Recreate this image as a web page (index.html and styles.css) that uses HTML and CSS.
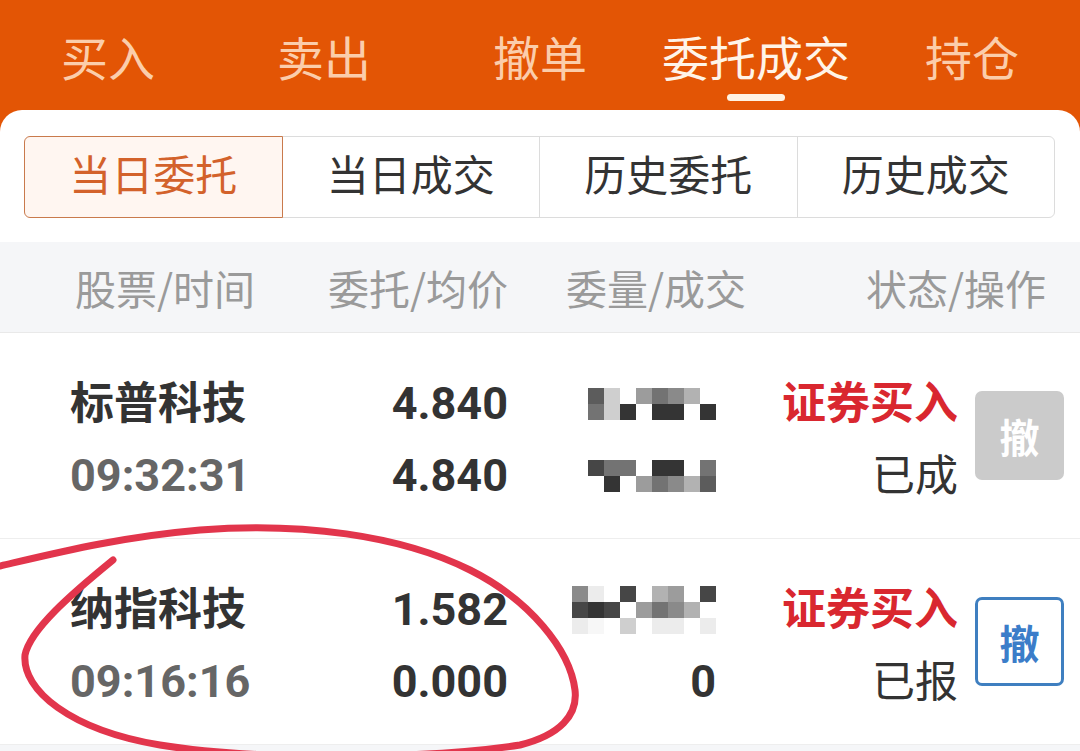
FILE: index.html
```html
<!DOCTYPE html>
<html lang="zh-CN">
<head>
  <meta charset="UTF-8">
  <meta name="viewport" content="width=device-width, initial-scale=1">
  <title>委托成交</title>
  <link rel="stylesheet" href="styles.css">
</head>
<body>
  <nav class="topnav">
    <div class="tab">买入</div>
    <div class="tab">卖出</div>
    <div class="tab">撤单</div>
    <div class="tab on">委托成交</div>
    <div class="tab">持仓</div>
  </nav>

  <main class="panel">
    <div class="seg">
      <div class="on">当日委托</div>
      <div>当日成交</div>
      <div>历史委托</div>
      <div>历史成交</div>
    </div>

    <div class="thead">
      <span>股票/时间</span>
      <span class="r">委托/均价</span>
      <span class="c3">委量/成交</span>
      <span class="r">状态/操作</span>
    </div>

    <div class="row">
      <div class="cell">
        <div class="ln name">标普科技</div>
        <div class="ln time">09:32:31</div>
      </div>
      <div class="cell r">
        <div class="ln price">4.840</div>
        <div class="ln price">4.840</div>
      </div>
      <div class="cell">
        <div class="ln mosaic">
          <div class="px w8">
            <i class="s3"></i><i class="s8"></i><i></i><i class="s6"></i><i class="s4"></i><i class="s5"></i><i class="s7"></i><i></i>
            <i class="s4"></i><i class="s8"></i><i class="s1"></i><i></i><i class="s1"></i><i class="s1"></i><i></i><i class="s1"></i>
          </div>
        </div>
        <div class="ln mosaic">
          <div class="px w8">
            <i class="s2"></i><i class="s4"></i><i class="s4"></i><i></i><i class="s1"></i><i class="s1"></i><i></i><i class="s4"></i>
            <i></i><i class="s1"></i><i></i><i class="s6"></i><i class="s4"></i><i class="s5"></i><i class="s7"></i><i class="s3"></i>
          </div>
        </div>
      </div>
      <div class="cell r">
        <div class="ln buy">证券买入</div>
        <div class="ln st">已成</div>
      </div>
      <div class="btn off">撤</div>
    </div>

    <div class="row">
      <div class="cell">
        <div class="ln name">纳指科技</div>
        <div class="ln time">09:16:16</div>
      </div>
      <div class="cell r">
        <div class="ln price">1.582</div>
        <div class="ln price">0.000</div>
      </div>
      <div class="cell">
        <div class="ln mosaic">
          <div class="px w9">
            <i class="s5"></i><i class="s9"></i><i></i><i class="s2"></i><i></i><i class="s7"></i><i class="s6"></i><i></i><i class="s2"></i>
            <i class="s2"></i><i class="s1"></i><i class="s2"></i><i></i><i class="s6"></i><i class="s4"></i><i class="s5"></i><i class="s7"></i><i></i>
            <i class="s9"></i><i class="s10"></i><i></i><i class="s8"></i><i></i><i class="s9"></i><i class="s9"></i><i></i><i class="s9"></i>
          </div>
        </div>
        <div class="ln price r">0</div>
      </div>
      <div class="cell r">
        <div class="ln buy">证券买入</div>
        <div class="ln st">已报</div>
      </div>
      <div class="btn on">撤</div>
    </div>
  </main>

  <!-- hand drawn marker round the second order -->
  <svg class="mark" width="1080" height="751" viewBox="0 0 1080 751">
    <path d="M113 560 C70 595 30 630 25 655 C22 690 70 730 160 745 C250 760 420 760 520 745 C560 735 578 715 575 690 C570 650 530 600 470 570 C400 535 300 522 200 530 C120 537 60 552 0 566"
          fill="none" stroke="#e2354c" stroke-width="7" stroke-linecap="round" stroke-linejoin="round"/>
  </svg>
</body>
</html>
```

FILE: styles.css
```css
body {
  margin: 0;
  background: #f5f6f8;
  font-family: Roboto, "Noto Sans CJK SC", sans-serif;
}
.topnav {
  display: flex;
  background: #e35505;
  padding-bottom: 22px;
}
.tab {
  flex: 1;
  height: 110px;
  display: flex;
  align-items: center;
  justify-content: center;
  font-size: 47px;
  color: #fbcdab;
  position: relative;
}
.tab.on {
  color: #fff4e8;
}
.tab.on::after {
  content: "";
  position: absolute;
  bottom: 9px;
  left: 50%;
  width: 58px;
  height: 7px;
  margin-left: -29px;
  border-radius: 4px;
  background: #fff3e4;
}
.panel {
  background: #fff;
  margin-top: -22px;
  border-radius: 22px 22px 0 0;
  padding-top: 26px;
}
.seg {
  display: flex;
  margin: 0 25px 24px 24px;
}
.seg div {
  flex: 1;
  height: 80px;
  line-height: 80px;
  text-align: center;
  border: 1px solid #dcdcdc;
  margin-left: -1px;
  font-size: 42px;
  color: #333;
}
.seg div:first-child {
  margin-left: 0;
  border-radius: 6px 0 0 6px;
}
.seg div:last-child {
  border-radius: 0 6px 6px 0;
}
.seg .on {
  position: relative;
  z-index: 1;
  border-color: #c97a4c;
  background: #fff6f1;
  color: #d3622b;
}
.thead {
  display: grid;
  grid-template-columns: 230px 203px 1fr auto;
  align-items: center;
  height: 90px;
  padding: 0 34px 0 75px;
  background: #f5f6f8;
  border-bottom: 1px solid #e9e9e9;
  font-family: "Noto Sans CJK SC", sans-serif;
  font-size: 41px;
  white-space: nowrap;
  color: #9a9a9a;
}
.thead .c3 {
  padding-left: 58px;
}
.r {
  text-align: right;
}
.row {
  display: grid;
  grid-template-columns: 190px 248px 208px 242px 1fr;
  align-items: center;
  height: 205px;
  padding: 0 16px 0 70px;
  border-bottom: 1px solid #eee;
  background: #fff;
}
.cell {
  display: flex;
  flex-direction: column;
  padding-top: 9px;
}
.ln {
  height: 72px;
  line-height: 72px;
  white-space: nowrap;
}
.name {
  font-size: 44px;
  font-weight: 700;
  color: #333;
}
.time {
  font-size: 45px;
  font-weight: 700;
  color: #666;
}
.price {
  font-size: 45px;
  font-weight: 700;
  color: #333;
}
.buy {
  font-size: 44px;
  font-weight: 700;
  color: #d9272f;
}
.st {
  font-size: 43px;
  color: #333;
}
.mosaic {
  display: flex;
  align-items: center;
  justify-content: flex-end;
}
.px {
  display: grid;
  grid-auto-rows: 16px;
}
.px.w8 {
  grid-template-columns: repeat(8, 16px);
}
.px.w9 {
  grid-template-columns: repeat(9, 16px);
}
.px i {
  display: block;
}
.s1 { background: #343434; }
.s2 { background: #464646; }
.s3 { background: #5c5c5c; }
.s4 { background: #737373; }
.s5 { background: #8a8a8a; }
.s6 { background: #9c9c9c; }
.s7 { background: #b2b2b2; }
.s8 { background: #cfcfcf; }
.s9 { background: #ececec; }
.s10 { background: #f7f7f7; }
.btn {
  justify-self: end;
  width: 89px;
  height: 89px;
  box-sizing: border-box;
  border-radius: 7px;
  display: flex;
  align-items: center;
  justify-content: center;
  font-size: 40px;
  font-weight: 700;
}
.btn.off {
  background: #cbcbcb;
  color: #fff;
}
.btn.on {
  background: #fff;
  border: 3px solid #3f7fc0;
  color: #3b7dc9;
}
.mark {
  position: absolute;
  top: 0;
  left: 0;
  pointer-events: none;
}
```
